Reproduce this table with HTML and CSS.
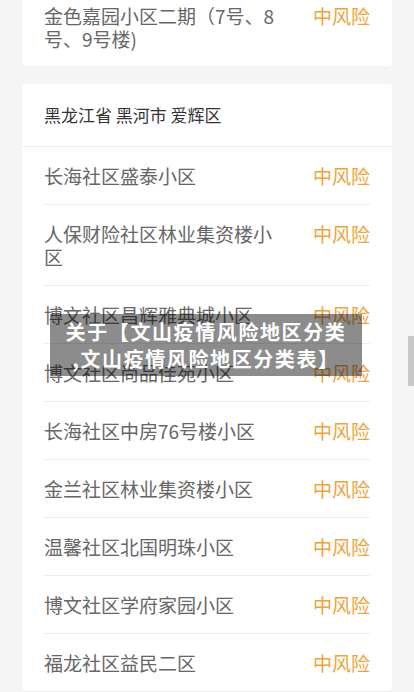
FILE: index.html
```html
<!DOCTYPE html>
<html lang="zh-CN">
<head>
    <meta charset="UTF-8">
    <meta name="viewport" content="width=device-width, initial-scale=1.0">
    <title>文山疫情风险地区分类表</title>
    <link rel="stylesheet" href="styles.css">
</head>
<body>
    <div class="page">
        <div class="card card-first">
            <div class="row">
                <span class="name">金色嘉园小区二期（7号、8号、9号楼)</span>
                <span class="risk">中风险</span>
            </div>
        </div>

        <div class="card">
            <div class="card-head">黑龙江省 黑河市 爱辉区</div>
            <div class="rows">
                <div class="row"><span class="name">长海社区盛泰小区</span><span class="risk">中风险</span></div>
                <div class="row"><span class="name">人保财险社区林业集资楼小区</span><span class="risk">中风险</span></div>
                <div class="row"><span class="name">博文社区昌辉雅典城小区</span><span class="risk">中风险</span></div>
                <div class="row"><span class="name">博文社区尚品佳苑小区</span><span class="risk">中风险</span></div>
                <div class="row"><span class="name">长海社区中房76号楼小区</span><span class="risk">中风险</span></div>
                <div class="row"><span class="name">金兰社区林业集资楼小区</span><span class="risk">中风险</span></div>
                <div class="row"><span class="name">温馨社区北国明珠小区</span><span class="risk">中风险</span></div>
                <div class="row"><span class="name">博文社区学府家园小区</span><span class="risk">中风险</span></div>
                <div class="row"><span class="name">福龙社区益民二区</span><span class="risk">中风险</span></div>
            </div>
        </div>
    </div>

    <!-- title banner floating over the list -->
    <div class="banner">关于【文山疫情风险地区分类<br>,文山疫情风险地区分类表】</div>
    <div class="scroll-thumb"></div>
</body>
</html>
```

FILE: styles.css
```css
:root {
    --bg-color: #f5f5f5;
    --card-bg: #ffffff;
    --text-color: #333;
    --name-color: #666;
    --risk-color: #f0a33a;
    --line-color: #eeeeee;
}

body {
    margin: 0;
    background-color: var(--bg-color);
    font-family: "Noto Sans CJK SC", "Noto Sans", sans-serif;
    color: var(--text-color);
    overflow: hidden;
    height: 692px;
}

.page {
    padding: 0 22px;
}

.card {
    background-color: var(--card-bg);
    border-radius: 4px;
    box-shadow: 0 1px 3px rgba(0, 0, 0, 0.03);
    margin-bottom: 18px;
}

.card-first {
    margin-top: -13px; /* page is scrolled down a little */
}

.card-head {
    height: 62px;
    line-height: 62px;
    padding: 0 22px;
    font-size: 17px;
    border-bottom: 1px solid var(--line-color);
}

.rows {
    padding: 0 22px;
}

.row {
    display: flex;
    justify-content: space-between;
    align-items: flex-start;
    padding: 17px 0;
    font-size: 19px;
    line-height: 23px;
    border-bottom: 1px solid var(--line-color);
}

.row:last-child,
.card-first .row {
    border-bottom: none;
}

.card-first .row {
    padding: 17px 22px 16px;
}

.name {
    width: 240px;
    color: var(--name-color);
}

.risk {
    color: var(--risk-color);
    white-space: nowrap;
}

.banner {
    position: absolute;
    left: 50px;
    top: 314px;
    width: 312px;
    height: 62px;
    box-sizing: border-box;
    padding: 4px 0;
    background-color: rgba(0, 0, 0, 0.45);
    color: #fff;
    font-weight: bold;
    font-size: 20px;
    letter-spacing: 1.6px;
    line-height: 27px;
    text-align: center;
}

.scroll-thumb {
    position: absolute;
    right: 0;
    top: 336px;
    width: 6px;
    height: 50px;
    background-color: #c8c8c8;
}
```
